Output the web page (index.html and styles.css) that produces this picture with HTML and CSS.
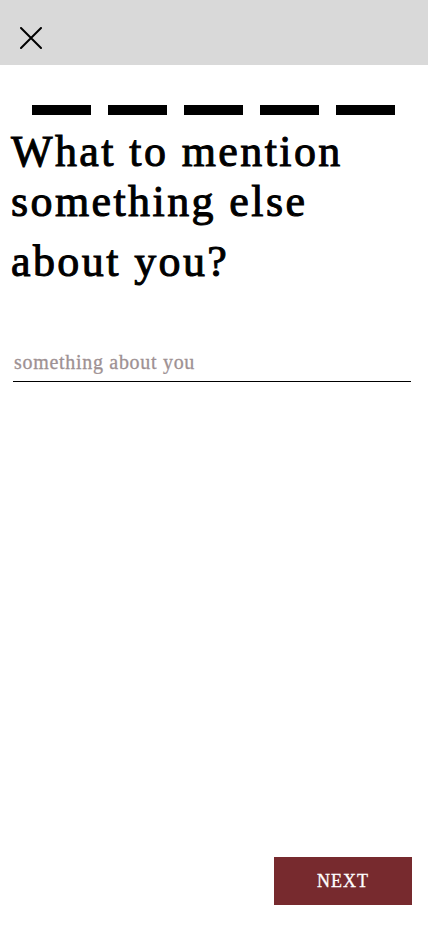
FILE: index.html
```html
<!DOCTYPE html>
<html lang="en">
<head>
<meta charset="utf-8">
<meta name="viewport" content="width=device-width, initial-scale=1">
<title>About you</title>
<link rel="stylesheet" href="styles.css">
</head>
<body>
<div class="page">
  <header class="topbar">
    <button class="close" aria-label="Close">
      <svg width="22" height="22" viewBox="0 0 22 22" fill="none" stroke="#000" stroke-width="2" stroke-linecap="round">
        <path d="M1 1 L21 21 M21 1 L1 21"/>
      </svg>
    </button>
  </header>
  <main class="content">
    <div class="progress">
      <span class="step"></span>
      <span class="step"></span>
      <span class="step"></span>
      <span class="step"></span>
      <span class="step"></span>
    </div>
    <h1 class="title">
      <span class="title-block">What to mention<br>something else</span>
      <span class="title-block title-last">about you?</span>
    </h1>
    <input class="field" type="text" placeholder="something about you">
  </main>
  <footer class="actions">
    <button class="next">NEXT</button>
  </footer>
</div>
</body>
</html>
```

FILE: styles.css
```css
* { box-sizing: border-box; }
html, body { margin: 0; padding: 0; }
body {
  background: #fff;
  font-family: "Liberation Serif", "DejaVu Serif", serif;
  color: #000;
}
.page {
  min-height: 100vh;
  display: flex;
  flex-direction: column;
}
.topbar {
  height: 65px;
  background: #d9d9d9;
  display: flex;
  align-items: center;
  padding-left: 20px;
  padding-top: 11px;
}
.close {
  border: 0;
  background: none;
  padding: 0;
  width: 22px;
  height: 22px;
  display: block;
  cursor: pointer;
}
.close svg { display: block; }
.content {
  display: flex;
  flex-direction: column;
}
.progress {
  display: flex;
  gap: 17px;
  padding-left: 32px;
  margin-top: 40px;
}
.step {
  width: 59px;
  height: 10px;
  background: #000;
}
.title {
  margin: 12px 0 0 11px;
  font-size: 44px;
  font-weight: normal;
  letter-spacing: 2.4px;
  -webkit-text-stroke: 1px #000;
  line-height: 50px;
  display: flex;
  flex-direction: column;
}
.title-block { display: block; }
.title-last { margin-top: 10px; }
.field {
  margin: 63px 17px 0 13px;
  border: 0;
  border-bottom: 1px solid #000;
  outline: none;
  font-family: "Liberation Serif", "DejaVu Serif", serif;
  font-size: 20px;
  letter-spacing: 0.7px;
  line-height: 24px;
  height: 32px;
  padding: 0 0 7px 1px;
  background: transparent;
  color: #000;
}
.field::placeholder {
  color: #9e9193;
  opacity: 1;
  -webkit-text-stroke: 0.3px #9e9193;
}
.actions {
  margin-top: auto;
  display: flex;
  justify-content: flex-end;
  padding: 0 16px 21px;
}
.next {
  width: 138px;
  height: 48px;
  border: 0;
  background: #772a2e;
  color: #fff;
  font-family: "Liberation Serif", "DejaVu Serif", serif;
  font-size: 18px;
  letter-spacing: 1px;
  -webkit-text-stroke: 0.3px #fff;
  cursor: pointer;
}
```
